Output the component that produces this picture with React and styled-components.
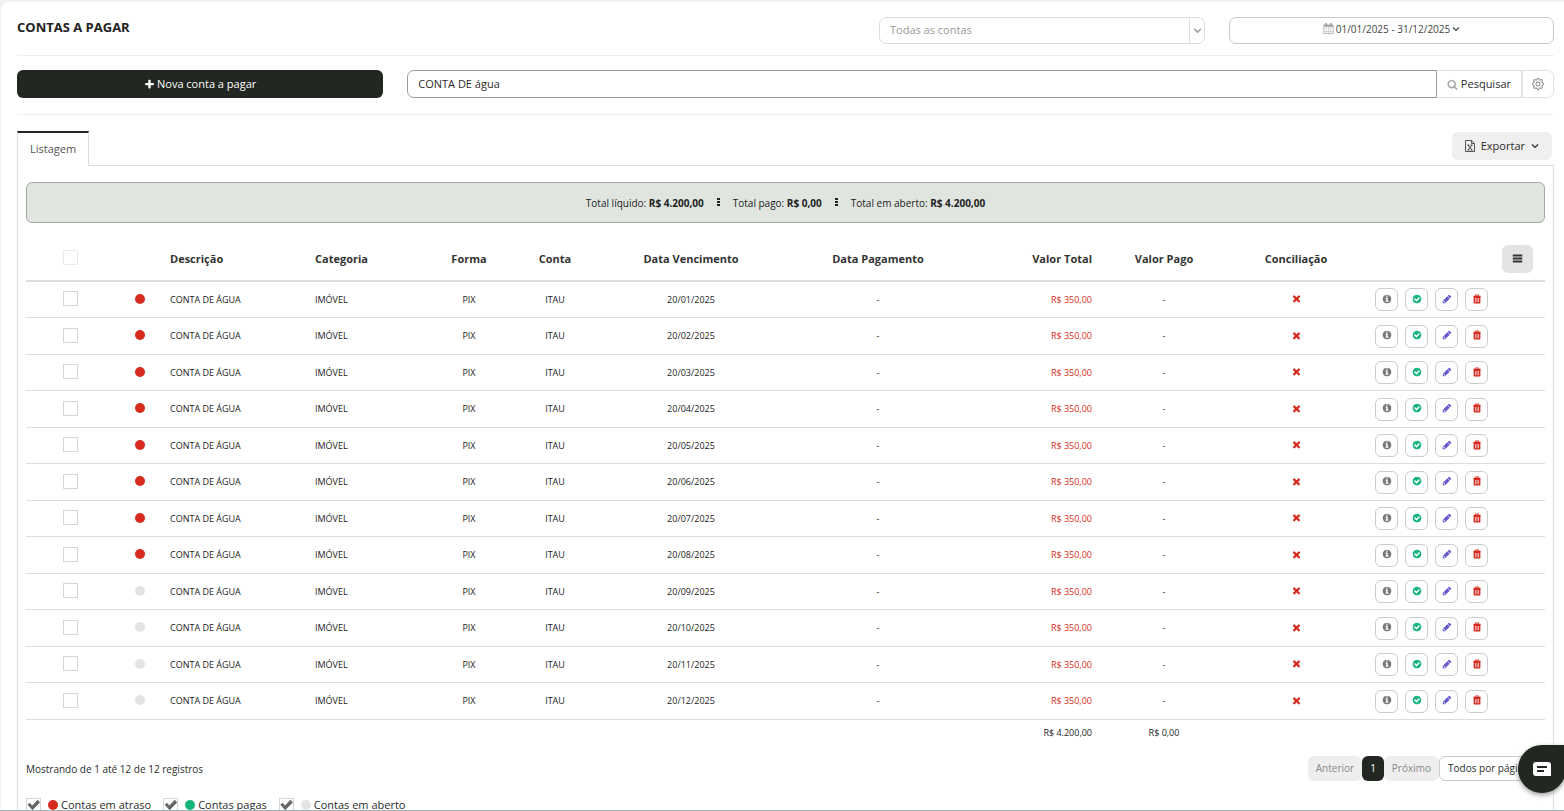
import React, { useState } from 'react';
import styled, { createGlobalStyle } from 'styled-components';
import { BsGear } from 'react-icons/bs';

const GlobalStyle = createGlobalStyle`
	* {
		box-sizing: border-box;
	}
	body {
		margin: 0;
		background: #f1f1f1;
		color: #2b2b2b;
		font-family: "Open Sans", "Noto Sans", sans-serif;
		font-size: 11px;
		line-height: 16px;
	}
	button, input, select {
		margin: 0;
		color: inherit;
		font: inherit;
	}
	button {
		cursor: pointer;
	}
`;

const Page = styled.div`
	height: 100vh;
	overflow: hidden;
	padding: 2px 0 0 1px;
	border-bottom: 1px solid #9fb3b2;
`;
const Card = styled.main`
	min-height: 100%;
	padding: 0 10px 0 16px;
	background: #fff;
	border-top-left-radius: 8px;
`;
const TopBar = styled.header`
	display: grid;
	grid-template-columns: 1fr 326px 325px;
	column-gap: 24px;
	height: 54px;
	padding-top: 15px;
	align-items: start;
	border-bottom: 1px solid #eee;
`;
const Title = styled.h1`
	margin: 0;
	font-size: 13px;
	line-height: 20px;
	font-weight: 700;
	color: #222;
`;
const SelectBox = styled.div`
	display: flex;
	height: 27px;
	border: 1px solid #ddd;
	border-radius: 7px;
	color: #999;
`;
const SelectField = styled.select`
	flex: 1;
	padding: 0 10px 2px;
	appearance: none;
	background: transparent;
	border: 0;
	outline: 0;
`;
const SelectAddon = styled.span`
	display: flex;
	width: 15px;
	align-items: center;
	justify-content: center;
	border-left: 1px solid #ddd;
	color: #999;
`;
const DateButton = styled.button`
	display: flex;
	height: 27px;
	padding: 0 0 4px;
	gap: 2px;
	align-items: center;
	justify-content: center;
	background: #fff;
	border: 1px solid #c8c8c8;
	border-radius: 7px;
	font-size: 10px;
	color: #444;
`;
const SearchBar = styled.div`
	display: grid;
	grid-template-columns: repeat(12, 1fr);
	column-gap: 24px;
	padding: 14px 0 16px;
	border-bottom: 1px solid #eee;
`;
const NewButton = styled.button`
	display: flex;
	grid-column: span 3;
	height: 28px;
	gap: 2px;
	align-items: center;
	justify-content: center;
	background: #222721;
	border: 0;
	border-radius: 6px;
	color: #fff;
`;
const SearchGroup = styled.form`
	display: flex;
	grid-column: span 9;
	height: 28px;
`;
const SearchInput = styled.input`
	flex: 1;
	min-width: 0;
	padding: 0 10px;
	border: 1px solid #999;
	border-radius: 7px 0 0 7px;
	outline: 0;
`;
const AddonButton = styled.button`
	display: flex;
	padding: 0 ${(p) => (p.$last ? '9px' : '10px')};
	gap: 3px;
	align-items: center;
	background: #fff;
	border: 1px solid #e2e2e2;
	border-left-width: ${(p) => (p.$last ? '1px' : '0')};
	border-radius: ${(p) => (p.$last ? '0 7px 7px 0' : '0')};
`;
const TabBar = styled.div`
	display: flex;
	height: 51px;
	padding: 16px 2px 0 0;
	align-items: flex-start;
	justify-content: space-between;
	background: linear-gradient(#ddd, #ddd) bottom / 100% 1px no-repeat;
`;
const Tab = styled.button`
	height: 35px;
	padding: 0 12px 2px;
	background: #fff;
	border: 1px solid #ddd;
	border-top: 2px solid #222721;
	border-bottom: 0;
	color: #555;
`;
const ExportButton = styled.button`
	display: flex;
	height: 28px;
	margin-top: 1px;
	padding: 0 13px;
	gap: 6px;
	align-items: center;
	background: #efefef;
	border: 0;
	border-radius: 6px;
`;
const Panel = styled.section`
	padding: 16px 8px 20px;
	border: 1px solid #ddd;
	border-top: 0;
`;
const Totals = styled.div`
	display: flex;
	height: 41px;
	gap: 13px;
	align-items: center;
	justify-content: center;
	background: #e0e5df;
	border: 1px solid #a5a8a4;
	border-radius: 6px;
	font-size: 10px;
	color: #222;
`;
const Table = styled.table`
	width: 100%;
	margin-top: 14px;
	table-layout: fixed;
	border-collapse: separate;
	border-spacing: 0;
`;
const Col = styled.col`
	width: ${(p) => p.$w}px;
`;
const Th = styled.th`
	height: 45px;
	padding: 0 4px;
	border-bottom: 2px solid #ddd;
	text-align: ${(p) => p.$align || 'center'};
	font-weight: 700;
	color: #333;
`;
const Tr = styled.tr`
	height: 36px;
	&:nth-child(even) {
		height: 37px;
	}
`;
const Td = styled.td`
	padding: 0 4px;
	border-bottom: 1px solid #ddd;
	text-align: ${(p) => p.$align || 'center'};
	font-size: 9px;
	line-height: 12px;
	color: ${(p) => p.$color || '#222'};
`;
const TotalTd = styled(Td)`
	height: 26px;
	border-bottom: 0;
`;
const Centered = styled.span`
	display: flex;
	padding-bottom: 2px;
	justify-content: center;
`;
const Check = styled.input`
	display: block;
	width: 15px;
	height: 15px;
	margin: 0;
	appearance: none;
	background: #fff;
	border: 1px solid #d6d6d6;
	opacity: ${(p) => (p.$faded ? 0.5 : 1)};
	&:checked::before {
		content: "";
		display: block;
		width: 13px;
		height: 13px;
		background: #666;
		clip-path: polygon(4% 48%, 22% 32%, 40% 54%, 82% 10%, 100% 30%, 42% 90%);
	}
`;
const Dot = styled.span`
	width: 10px;
	height: 10px;
	border-radius: 50%;
	background: ${(p) => p.$color};
`;
const Actions = styled.div`
	display: flex;
	padding-left: 11px;
	gap: 7px;
`;
const ActionButton = styled.button`
	display: flex;
	width: 23px;
	height: 23px;
	padding: 0 0 2px;
	align-items: center;
	justify-content: center;
	background: #fff;
	border: 1px solid #ccc;
	border-radius: 6px;
	color: ${(p) => p.$color};
`;
const MenuButton = styled.button`
	display: flex;
	width: 31px;
	height: 28px;
	margin: 0 8px 0 auto;
	padding: 0;
	align-items: center;
	justify-content: center;
	background: #e4e4e4;
	border: 0;
	border-radius: 6px;
	color: #333;
`;
const Bottom = styled.div`
	display: flex;
	margin-top: 10px;
	align-items: center;
	justify-content: space-between;
	font-size: 10px;
`;
const Pager = styled.nav`
	display: flex;
`;
const PageButton = styled.button`
	height: 25px;
	padding: 0 8px 2px;
	background: ${(p) => (p.$active ? '#222721' : '#eee')};
	border: 0;
	border-radius: 6px;
	color: ${(p) => (p.$active ? '#fff' : '#888')};
`;
const PageSize = styled.select`
	width: 106px;
	height: 25px;
	padding: 0 8px 2px;
	appearance: none;
	background: #fff;
	border: 1px solid #ccc;
	border-radius: 6px;
`;
const Legend = styled.div`
	display: flex;
	margin-top: 16px;
	gap: 12px;
`;
const LegendItem = styled.label`
	display: flex;
	gap: 3px;
	align-items: center;
	${Check} {
		margin-right: 4px;
	}
`;
const ChatButton = styled.button`
	position: fixed;
	right: -2px;
	bottom: 18px;
	display: flex;
	width: 48px;
	height: 48px;
	padding: 0;
	align-items: center;
	justify-content: center;
	background: #222721;
	border: 0;
	border-radius: 24px 0 24px 24px;
	box-shadow: 0 2px 5px rgba(0, 0, 0, 0.4);
`;
const Svg = styled.svg`
	display: block;
	flex: none;
	fill: currentColor;
	color: ${(p) => p.$color || 'inherit'};
`;

const CIRCLE = 'M1664 896q0 209-103 385.5t-279.5 279.5-385.5 103-385.5-103-279.5-279.5-103-385.5 103-385.5 279.5-279.5 385.5-103 385.5 103 279.5 279.5 103 385.5z';

const paths = {
	plus: 'M1600 736v192q0 40-28 68t-68 28h-416v416q0 40-28 68t-68 28h-192q-40 0-68-28t-28-68v-416h-416q-40 0-68-28t-28-68v-192q0-40 28-68t68-28h416v-416q0-40 28-68t68-28h192q40 0 68 28t28 68v416h416q40 0 68 28t28 68z',
	times: 'M1490 1322q0 40-28 68l-136 136q-28 28-68 28t-68-28l-294-294-294 294q-28 28-68 28t-68-28l-136-136q-28-28-28-68t28-68l294-294-294-294q-28-28-28-68t28-68l136-136q28-28 68-28t68 28l294 294 294-294q28-28 68-28t68 28l136 136q28 28 28 68t-28 68l-294 294 294 294q28 28 28 68z',
	info: 'M1152 1376v-160q0-14-9-23t-23-9h-96v-512q0-14-9-23t-23-9h-320q-14 0-23 9t-9 23v160q0 14 9 23t23 9h96v320h-96q-14 0-23 9t-9 23v160q0 14 9 23t23 9h448q14 0 23-9t9-23zm-128-896v-160q0-14-9-23t-23-9h-192q-14 0-23 9t-9 23v160q0 14 9 23t23 9h192q14 0 23-9t9-23z' + CIRCLE,
	done: 'M1412 734q0-28-18-46l-91-90q-19-19-45-19t-45 19l-408 407-226-226q-19-19-45-19t-45 19l-91 90q-18 18-18 46 0 27 18 45l362 362q19 19 45 19 27 0 46-19l543-543q18-18 18-45z' + CIRCLE,
	search: 'M1216 832q0-185-131.5-316.5t-316.5-131.5-316.5 131.5-131.5 316.5 131.5 316.5 316.5 131.5 316.5-131.5 131.5-316.5zm512 832q0 52-38 90t-90 38q-54 0-90-38l-343-342q-179 124-399 124-143 0-273.5-55.5t-225-150-150-225-55.5-273.5 55.5-273.5 150-225 225-150 273.5-55.5 273.5 55.5 225 150 150 225 55.5 273.5q0 220-124 399l343 343q37 37 37 90z',
	pencil: 'M491 1536l91-91-235-235-91 91v107h128v128h107zM960 416l416 416-832 832h-416v-416zm683 96q0 53-37 90l-166 166-416-416 166-165q36-38 90-38 53 0 91 38l235 234q37 39 37 91z',
	calendar: 'M192 1664h288v-288h-288v288zm352 0h320v-288h-320v288zm-352-352h288v-320h-288v320zm352 0h320v-320h-320v320zm-352-384h288v-288h-288v288zm736 736h320v-288h-320v288zm-384-736h320v-288h-320v288zm768 736h288v-288h-288v288zm-384-352h320v-320h-320v320zm384 0h288v-320h-288v320zm-384-384h320v-288h-320v288zm384 0h288v-288h-288v288zM1728 384v1280q0 52-38 90t-90 38h-1408q-52 0-90-38t-38-90v-1280q0-52 38-90t90-38h128v-96q0-66 47-113t113-47h64q66 0 113 47t47 113v96h384v-96q0-66 47-113t113-47h64q66 0 113 47t47 113v96h128q52 0 90 38t38 90z',
	trash: 'M576 96h640v224h320v288h-1280v-288h320zM736 240v80h320v-80zM288 608h1216v960q0 128-128 128h-960q-128 0-128-128zM560 736v720h112v-720zM840 736v720h112v-720zM1120 736v720h112v-720z',
	bars: 'M128 256h1536v320H128zM128 736h1536v320H128zM128 1216h1536v320H128z',
};

const Icon = ({ name, size, color }) => (
	<Svg width={size} height={size} viewBox="0 0 1792 1792" $color={color} aria-hidden="true">
		<path d={paths[name]} fillRule="evenodd" />
	</Svg>
);

const Chevron = ({ size = 8 }) => (
	<Svg width={size} height={size} viewBox="0 0 8 8" aria-hidden="true">
		<path d="M1 2.5l3 3 3-3" fill="none" stroke="currentColor" strokeWidth="1.2" />
	</Svg>
);

const ExcelIcon = () => (
	<Svg width="10" height="12" viewBox="0 0 10 12" aria-hidden="true">
		<path d="M.5.5h6l3 3v8h-9zM6.5.5v3h3" fill="none" stroke="#555" />
		<path d="M3 5l4 5M7 5l-4 5M2.4 5h2M5.6 5h2M2.4 10h2M5.6 10h2" fill="none" stroke="#444" />
	</Svg>
);

const Dots = () => (
	<Svg width="3" height="10" viewBox="0 0 3 10" aria-hidden="true">
		<path d="M0 0h3v2H0zM0 3h3v2H0zM0 6h3v2H0z" />
	</Svg>
);

const ChatIcon = () => (
	<Svg width="20" height="16" viewBox="0 0 20 16" aria-hidden="true">
		<path d="M4 1h12q3 0 3 3v11H4q-3 0-3-3V4q0-3 3-3z" fill="#fff" />
		<path d="M5 6h10M5 10h7" stroke="#222721" strokeWidth="2" />
	</Svg>
);

const RED = '#d72b20';
const GREEN = '#15b57c';
const GREY = '#e4e4e4';

const widths = [88, 52, 145, 113, 90, 82, 190, 184, 126, 136, 128, 185];

const rows = Array.from({ length: 12 }, (_, i) => ({
	date: `20/${String(i + 1).padStart(2, '0')}/2025`,
	late: i < 8,
}));

const actions = [
	{ name: 'info', label: 'Detalhes', color: '#777' },
	{ name: 'done', label: 'Baixar', color: GREEN },
	{ name: 'pencil', label: 'Editar', color: '#6459cc' },
	{ name: 'trash', label: 'Excluir', color: RED },
];

const legend = [
	{ text: 'Contas em atraso', color: RED },
	{ text: 'Contas pagas', color: GREEN },
	{ text: 'Contas em aberto', color: GREY },
];

const Row = ({ row }) => (
	<Tr>
		<Td><Centered><Check type="checkbox" aria-label={`Selecionar ${row.date}`} /></Centered></Td>
		<Td><Centered><Dot $color={row.late ? RED : GREY} /></Centered></Td>
		<Td $align="left">CONTA DE ÁGUA</Td>
		<Td $align="left">IMÓVEL</Td>
		<Td>PIX</Td>
		<Td>ITAU</Td>
		<Td>{row.date}</Td>
		<Td>-</Td>
		<Td $align="right" $color={RED}>R$ 350,00</Td>
		<Td>-</Td>
		<Td><Centered><Icon name="times" size={11} color={RED} /></Centered></Td>
		<Td>
			<Actions>
				{actions.map((a) => (
					<ActionButton key={a.name} type="button" aria-label={a.label} $color={a.color}>
						<Icon name={a.name} size={10} />
					</ActionButton>
				))}
			</Actions>
		</Td>
	</Tr>
);

const App = () => {
	const [search, setSearch] = useState('CONTA DE água');

	return (
		<>
			<GlobalStyle />
			<Page>
				<Card>
					<TopBar>
						<Title>CONTAS A PAGAR</Title>
						<SelectBox>
							<SelectField aria-label="Conta">
								<option>Todas as contas</option>
							</SelectField>
							<SelectAddon><Chevron size={9} /></SelectAddon>
						</SelectBox>
						<DateButton type="button">
							<Icon name="calendar" size={11} color="#aaa" />
							01/01/2025 - 31/12/2025
							<Chevron />
						</DateButton>
					</TopBar>

					<SearchBar>
						<NewButton type="button"><Icon name="plus" size={11} />Nova conta a pagar</NewButton>
						<SearchGroup onSubmit={(e) => e.preventDefault()}>
							<SearchInput
								aria-label="Pesquisar conta"
								value={search}
								onChange={(e) => setSearch(e.target.value)}
							/>
							<AddonButton type="submit"><Icon name="search" size={11} color="#aaa" />Pesquisar</AddonButton>
							<AddonButton type="button" aria-label="Filtros" $last><BsGear size={12} color="#666" /></AddonButton>
						</SearchGroup>
					</SearchBar>

					<TabBar>
						<Tab type="button">Listagem</Tab>
						<ExportButton type="button"><ExcelIcon />Exportar<Chevron /></ExportButton>
					</TabBar>

					<Panel>
						<Totals>
							<span>Total líquido: <b>R$ 4.200,00</b></span>
							<Dots />
							<span>Total pago: <b>R$ 0,00</b></span>
							<Dots />
							<span>Total em aberto: <b>R$ 4.200,00</b></span>
						</Totals>

						<Table>
							<colgroup>
								{widths.map((w, i) => <Col key={i} $w={w} />)}
							</colgroup>
							<thead>
								<tr>
									<Th><Centered><Check type="checkbox" aria-label="Selecionar todas" $faded /></Centered></Th>
									<Th />
									<Th $align="left">Descrição</Th>
									<Th $align="left">Categoria</Th>
									<Th>Forma</Th>
									<Th>Conta</Th>
									<Th>Data Vencimento</Th>
									<Th>Data Pagamento</Th>
									<Th $align="right">Valor Total</Th>
									<Th>Valor Pago</Th>
									<Th>Conciliação</Th>
									<Th><MenuButton type="button" aria-label="Colunas"><Icon name="bars" size={11} /></MenuButton></Th>
								</tr>
							</thead>
							<tbody>
								{rows.map((row) => <Row key={row.date} row={row} />)}
							</tbody>
							<tfoot>
								<tr>
									<TotalTd colSpan={8} />
									<TotalTd $align="right">R$ 4.200,00</TotalTd>
									<TotalTd>R$ 0,00</TotalTd>
									<TotalTd colSpan={2} />
								</tr>
							</tfoot>
						</Table>

						<Bottom>
							<span>Mostrando de 1 até 12 de 12 registros</span>
							<Pager aria-label="Paginação">
								<PageButton type="button">Anterior</PageButton>
								<PageButton type="button" $active>1</PageButton>
								<PageButton type="button">Próximo</PageButton>
								<PageSize aria-label="Registros por página">
									<option>Todos por página</option>
								</PageSize>
							</Pager>
						</Bottom>

						<Legend>
							{legend.map((item) => (
								<LegendItem key={item.text}>
									<Check type="checkbox" defaultChecked />
									<Dot $color={item.color} />
									{item.text}
								</LegendItem>
							))}
						</Legend>
					</Panel>
				</Card>
			</Page>
			<ChatButton type="button" aria-label="Abrir chat"><ChatIcon /></ChatButton>
		</>
	);
};

export default App;
